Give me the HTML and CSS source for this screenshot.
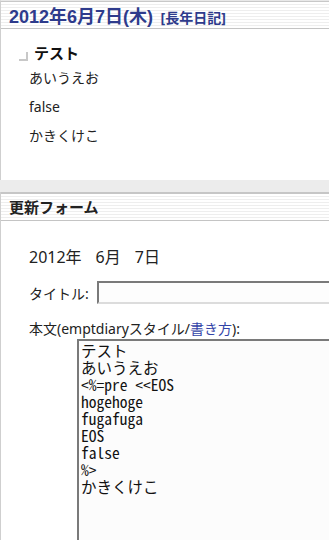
FILE: index.html
```html
<!DOCTYPE html>
<html lang="ja">
<head>
<meta charset="utf-8">
<title>日記</title>
<link rel="stylesheet" href="styles.css">
</head>
<body>
<div class="day">
  <h2 class="day-title"><span class="date">2012年6月7日(木)</span> <span class="nen">[長年日記]</span></h2>
  <div class="day-body">
    <h3 class="sec"><span class="mark"></span>テスト</h3>
    <p>あいうえお</p>
    <p>false</p>
    <p>かきくけこ</p>
  </div>
</div>
<div class="gap"></div>
<div class="update">
  <h2 class="update-title">更新フォーム</h2>
  <div class="form">
    <div class="date-row"><span>2012年</span><span>6月</span><span>7日</span></div>
    <div class="title-row"><span class="label">タイトル:</span><span class="input"></span></div>
    <div class="body-label">本文(emptdiaryスタイル/<a href="#">書き方</a>):</div>
    <div class="textarea">テスト
あいうえお
&lt;%=pre &lt;&lt;EOS
hogehoge
fugafuga
EOS
false
%&gt;
かきくけこ</div>
  </div>
</div>
</body>
</html>
```
FILE: styles.css
```css
html, body {
  margin: 0;
  padding: 0;
  background: #fff;
  overflow: hidden;
}
body {
  width: 329px;
  height: 540px;
  font-family: "Noto Sans", "Noto Sans CJK JP", sans-serif;
  color: #222;
  font-size: 14px;
}
.day {
  border-left: 1px solid #cfcfcf;
  border-top: 1px solid #e8e8e8;
}
.day-title, .update-title {
  margin: 0;
  border-top: 1px solid #c8c8c8;
  border-bottom: 1px solid #c4c4c4;
  background: repeating-linear-gradient(to bottom, #ffffff 0 2px, #eeeeee 2px 3px);
  height: 26px;
  line-height: 27px;
  padding-left: 8px;
  white-space: nowrap;
  overflow: hidden;
}
.date {
  color: #2e3b8c;
  font-size: 18px;
  font-weight: bold;
  font-family: "Liberation Sans", "Noto Sans CJK JP", sans-serif;
}
.nen {
  color: #2e3b8c;
  font-size: 14px;
  font-weight: bold;
  margin-left: 2px;
}
.day-body {
  height: 151px;
  padding-top: 14px;
  box-sizing: border-box;
}
.sec {
  margin: 0;
  font-size: 15px;
  line-height: 20px;
  font-weight: bold;
  color: #111;
  display: flex;
  align-items: center;
  padding-left: 18px;
}
.mark {
  width: 7px;
  height: 7px;
  border-right: 2px solid #c8c8c8;
  border-bottom: 2px solid #c8c8c8;
  margin-right: 6px;
  margin-top: 6px;
}
.day-body p {
  margin: 0 0 8px 28px;
  line-height: 21px;
  font-size: 14px;
}
.day-body h3 + p {
  margin-top: 4px;
}
.gap {
  height: 12px;
  background: #ececec;
}
.update {
  border-left: 1px solid #cfcfcf;
}
.update-title {
  border-top: 2px solid #c6c6c6;
  height: 26px;
  font-size: 15px;
  font-weight: bold;
  color: #222;
}
.form {
  padding: 26px 0 0 28px;
}
.date-row {
  display: flex;
  gap: 14px;
  line-height: 20px;
  font-size: 16px;
}
.title-row {
  display: flex;
  align-items: center;
  margin-top: 14px;
  height: 23px;
}
.label {
  width: 68px;
}
.input {
  flex: 1;
  height: 19px;
  border: 2px solid #dcdcdc;
  border-top-color: #7a7a7a;
  border-left-color: #7a7a7a;
  border-right: none;
  background: #fdfdfd;
}
.body-label {
  margin-top: 15px;
  line-height: 20px;
  white-space: nowrap;
}
.body-label a {
  color: #3344a8;
  text-decoration: none;
}
.textarea {
  margin-left: 48px;
  height: 220px;
  border: 2px solid #dcdcdc;
  border-top-color: #7a7a7a;
  border-left-color: #7a7a7a;
  border-right: none;
  background: #fcfcfc;
  padding: 1px 2px;
  white-space: pre;
  overflow: hidden;
  font-family: "Noto Sans Mono CJK JP", "DejaVu Sans Mono", monospace;
  font-size: 15.5px;
  line-height: 17px;
  color: #111;
}
```
